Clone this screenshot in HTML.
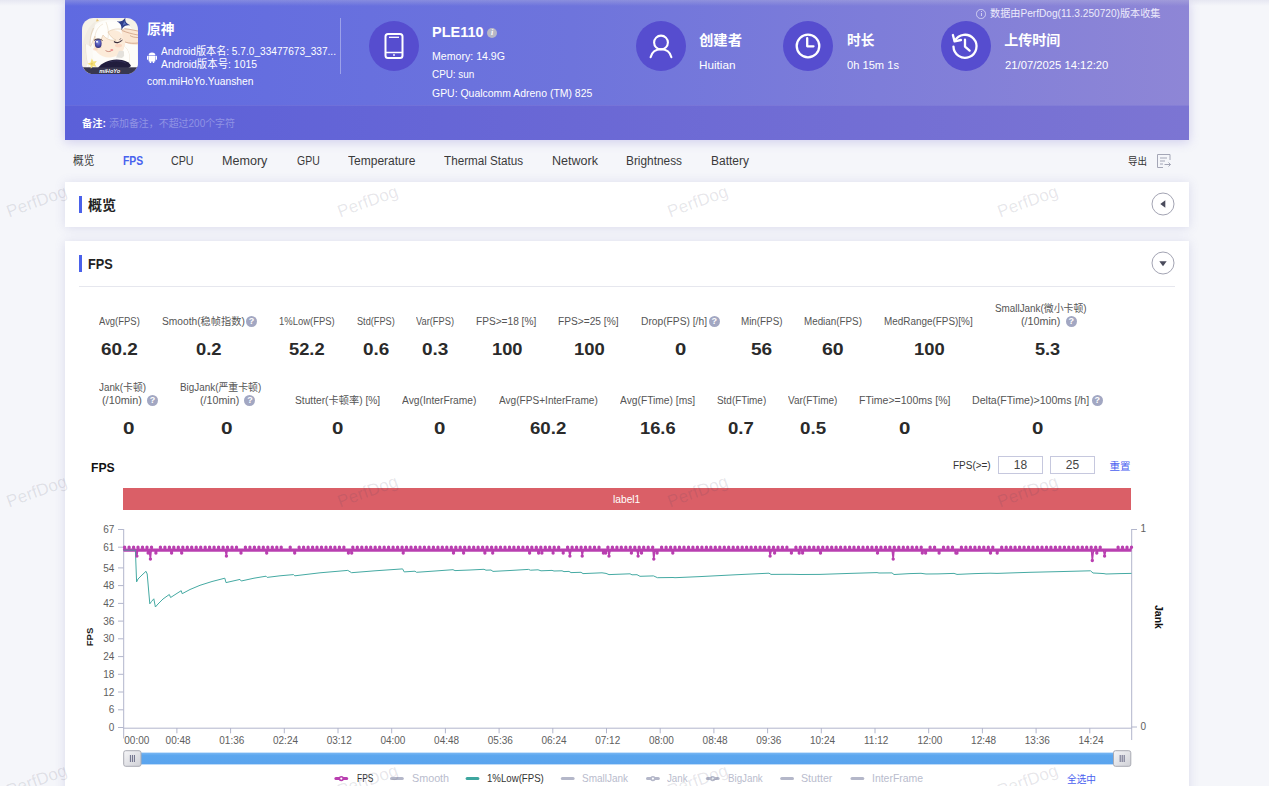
<!DOCTYPE html>
<html lang="zh-CN"><head><meta charset="utf-8"><title>PerfDog</title>
<style>
html,body{margin:0;padding:0}
body{width:1269px;height:786px;overflow:hidden;position:relative;background:#f5f6fa;font-family:"Liberation Sans", "Noto Sans CJK SC", sans-serif;}
.t{position:absolute;white-space:nowrap;}
.abs{position:absolute}
.card{position:absolute;left:65px;width:1124px;background:#fff;box-shadow:0 1px 10px rgba(100,100,180,.18)}
.wm{position:absolute;font-size:17px;letter-spacing:.1px;color:rgba(70,70,95,.135);transform:rotate(-20deg);transform-origin:center;white-space:nowrap;width:80px;height:24px;line-height:24px;text-align:center}
.circ{position:absolute;width:50px;height:50px;border-radius:50%;background:#564dcf}
.q{display:inline-block;width:11px;height:11px;border-radius:50%;background:#9a9fb0;color:#fff;font-size:9px;line-height:11px;text-align:center;font-weight:bold;vertical-align:middle;margin-left:3px;position:relative;top:-1px}
</style></head><body>

<div class="abs" style="left:65px;top:0;width:1124px;height:140px;background:linear-gradient(90deg,#5f6ae1 0%,#6e74dc 45%,#8e86d6 100%);box-shadow:0 2px 10px rgba(110,100,210,.28)"></div>
<div class="abs" style="left:65px;top:105px;width:1124px;height:35px;background:linear-gradient(90deg,#5b60d9 0%,#6a68d5 45%,#7c75d3 100%);border-top:1px solid rgba(255,255,255,.08);box-sizing:border-box"></div>
<svg class="abs" style="left:82px;top:17.800px" width="56" height="56" viewBox="0 0 56 56">
<defs><clipPath id="ic"><rect x="0" y="0" width="56" height="56" rx="11.500"/></clipPath>
<radialGradient id="ey" cx=".5" cy=".35" r=".7"><stop offset="0" stop-color="#7f8fe0"/><stop offset=".6" stop-color="#4a4aa8"/><stop offset="1" stop-color="#2c2a66"/></radialGradient></defs>
<g clip-path="url(#ic)">
<rect width="56" height="56" fill="#f6f2e8"/>
<!-- back hair -->
<path d="M3 56C1 40 2 22 8 12 14 3 26 0 36 2 46 4 53 12 55 22L56 50 40 52 10 54Z" fill="#fdfcf9"/>
<path d="M0 30C2 18 6 8 14 3L10 20 6 44 2 56H0Z" fill="#f1ece2"/>
<!-- face -->
<path d="M11 22C12 14 22 10 32 12 40 13 44 20 43 27 42 34 36 39 28 39.500 19 40 10 33 11 22Z" fill="#fcebd9"/>
<path d="M37 33C40 32 43 33 44 36L40 40 34 39.500Z" fill="#e4e1dc"/>
<!-- blush -->
<ellipse cx="36.500" cy="27.500" rx="3.500" ry="1.800" fill="#f9cdb8" opacity=".7"/>
<ellipse cx="13.500" cy="31" rx="2.500" ry="1.500" fill="#f9cdb8" opacity=".6"/>
<!-- hand -->
<path d="M39 11C44 10 50 12 56 13V27C51 27 46 26 43 24 41 21 40 16 39 11Z" fill="#fbe6d2"/>
<path d="M39 11C44 10 50 12 56 13M40 12.500C45 14.500 50 16 56 17M43 24C47 25.500 52 25.500 56 25M48 17.500C50 19 53 19.500 56 19.500" stroke="#c9967a" stroke-width=".7" fill="none"/>
<!-- front hair / bangs -->
<path d="M8 30C7 18 12 7 24 4 33 2 41 6 43 12 36 10 30 11 26 14 28 18 31 21 34 22 29 23 24 21 21 17 19 21 18 26 19 30 15 27 13 22 13 18 11 22 10 26 8 30Z" fill="#fffefb"/>
<path d="M24 4C26 9 27 14 26 20M13 18C14 12 17 8 21 6" stroke="#e9dcc6" stroke-width=".6" fill="none"/>
<path d="M15 0.500l2 2.500-3 .5z" fill="#e9c57a"/><path d="M11.500 10C8.500 16 7.500 24 8.500 32M8 30C10 26 11 22 13 18 13 22 15 27 19 30 18 26 19 21 21 17 24 21 29 23 34 22 31 21 28 18 26 14 30 11 36 10 43 12" stroke="#dcc0a0" stroke-width=".55" fill="none" stroke-linejoin="round"/><path d="M42 28C47 32 49 40 46 46M4 26C4 36 5 46 9 54" stroke="#e3d2bb" stroke-width=".5" fill="none"/>
<!-- left hair fall -->
<path d="M4 26C4 36 5 46 9 54L16 52C12 46 10 38 11 30Z" fill="#fbf9f4"/>
<!-- right hair lock -->
<path d="M42 28C47 32 49 40 46 46 44 50 40 52 36 52 41 48 43 42 42 36Z" fill="#fffefb"/>
<!-- eye -->
<ellipse cx="16.200" cy="25.600" rx="3.400" ry="4.500" fill="url(#ey)"/>
<path d="M12 22.500C14 20.500 18 20.500 20.500 22.500" stroke="#3a2d3a" stroke-width="1" fill="none"/>
<circle cx="15" cy="23.800" r="1" fill="#fff"/>
<!-- wink -->
<path d="M32 23.500C34 25.300 37.500 25 39.500 22.500" stroke="#3a2d3a" stroke-width="1.100" fill="none"/>
<path d="M37.500 22l1.500-1.800M39 23l1.800-1.200" stroke="#3a2d3a" stroke-width=".6"/>
<!-- mouth -->
<path d="M23.500 32.500C25.500 34 28 34 30 32.300" stroke="#b5665a" stroke-width=".7" fill="none"/>
<ellipse cx="29.800" cy="32" rx="1.500" ry="1" fill="#ee8f8f"/>
<!-- star -->
<path d="M41.500 -1C42 3 43.500 4.500 48.500 5 43.500 6.500 42.500 8 41.500 12.500 40.500 8 39 6.500 34.500 5.500 39 4.500 40.500 3 41.500 -1Z" fill="#2f3f8a" transform="rotate(18 41.500 5.500)"/>
<path d="M41.500 2C41.800 4 42.500 4.800 45 5.200 42.500 5.800 42 6.500 41.500 9Z" fill="#5f78c8" transform="rotate(18 41.500 5.500)"/>
<!-- scarf -->
<path d="M16 50C20 44 30 40 40 42 45 43 48 45 49 48L44 52 20 54Z" fill="#211d3d"/>
<path d="M24 46C30 42 38 42 44 45" stroke="#3a3560" stroke-width=".8" fill="none"/>
<!-- bottom band -->
<rect x="0" y="49.300" width="56" height="7" fill="#38374f"/>
<path d="M18 49.300C22 45 30 43 36 44 32 46 30 48 29 49.300Z" fill="#211d3d"/>
<!-- flower -->
<path d="M9.800 40.500l1.600 3 3.400-.4-2 2.800 1.800 3-3.400-.8-2.400 2.600-.2-3.500-3.200-1.500 3.200-1.300z" fill="#f6e27a"/>
<circle cx="9.800" cy="45.800" r="1" fill="#e8c95a"/>
</g>
<text x="27.800" y="54.800" font-size="5.600" font-weight="bold" font-style="italic" fill="#fff" text-anchor="middle" font-family="'Liberation Sans', 'Noto Sans CJK SC', sans-serif">miHoYo</text>
</svg>
<div class="t" style="left:147px;top:18.5px;height:20px;line-height:20px;font-size:14px;color:#fff;font-weight:bold;transform:scaleX(0.9821);transform-origin:0 50%;">原神</div>
<svg class="abs" style="left:147px;top:51.500px" width="10" height="11.500" viewBox="0 0 18 22" preserveAspectRatio="none"><g fill="#fff"><path d="M3 7h12v10a1 1 0 0 1-1 1H4a1 1 0 0 1-1-1z"/><path d="M3 6a6 5 0 0 1 12 0z"/><rect x="0" y="7" width="2.4" height="8" rx="1.2"/><rect x="15.6" y="7" width="2.4" height="8" rx="1.2"/><rect x="5" y="17" width="2.6" height="5" rx="1.3"/><rect x="10.4" y="17" width="2.6" height="5" rx="1.3"/></g></svg>
<div class="t" style="left:160.5px;top:41.0px;height:20px;line-height:20px;font-size:11px;color:#fff;transform:scaleX(0.9201);transform-origin:0 50%;">Android版本名: 5.7.0_33477673_337...</div>
<div class="t" style="left:160.5px;top:53.5px;height:20px;line-height:20px;font-size:11px;color:#fff;transform:scaleX(0.9458);transform-origin:0 50%;">Android版本号: 1015</div>
<div class="t" style="left:147px;top:71.3px;height:20px;line-height:20px;font-size:11px;color:#fff;transform:scaleX(0.9346);transform-origin:0 50%;">com.miHoYo.Yuanshen</div>
<div class="abs" style="left:340px;top:18px;width:1px;height:56px;background:rgba(255,255,255,.35)"></div>
<div class="circ" style="left:369px;top:21px"></div>
<svg class="abs" style="left:382px;top:32px" width="24" height="28" viewBox="0 0 24 28"><rect x="3.5" y="2" width="17" height="24" rx="2.5" fill="none" stroke="#fff" stroke-width="2"/><line x1="4" y1="20.500" x2="20" y2="20.500" stroke="#fff" stroke-width="1.5"/><line x1="7" y1="5.300" x2="17" y2="5.300" stroke="#fff" stroke-width="1.3"/><circle cx="12" cy="23" r="0.9" fill="#fff"/></svg>
<div class="t" style="left:432px;top:21.8px;height:20px;line-height:20px;font-size:14px;color:#fff;font-weight:bold;transform:scaleX(1.0336);transform-origin:0 50%;">PLE110</div>
<div class="abs" style="left:487px;top:28px;width:10px;height:10px;border-radius:50%;background:#b7b7c6;color:#fff;font-size:8px;line-height:10px;text-align:center;font-weight:bold;font-style:italic;font-family:'Liberation Serif',serif">i</div>
<div class="t" style="left:432px;top:45.8px;height:20px;line-height:20px;font-size:11px;color:#fff;transform:scaleX(0.9629);transform-origin:0 50%;">Memory: 14.9G</div>
<div class="t" style="left:432px;top:64.0px;height:20px;line-height:20px;font-size:11px;color:#fff;transform:scaleX(0.8985);transform-origin:0 50%;">CPU: sun</div>
<div class="t" style="left:432px;top:83.0px;height:20px;line-height:20px;font-size:11px;color:#fff;transform:scaleX(0.9500);transform-origin:0 50%;">GPU: Qualcomm Adreno (TM) 825</div>
<div class="circ" style="left:636px;top:21px"></div>
<svg class="abs" style="left:648px;top:33px" width="26" height="26" viewBox="0 0 26 26" fill="none" stroke="#fff" stroke-width="2.100" stroke-linecap="round"><circle cx="13" cy="9.500" r="6.900"/><path d="M2.600 24.300c1.300-5.300 5.400-8 10.400-8s9.100 2.700 10.400 8"/></svg>
<div class="t" style="left:699px;top:30.0px;height:20px;line-height:20px;font-size:14px;color:#fff;font-weight:bold;transform:scaleX(1.0238);transform-origin:0 50%;">创建者</div>
<div class="t" style="left:699.3px;top:55.3px;height:20px;line-height:20px;font-size:11px;color:#fff;transform:scaleX(1.0657);transform-origin:0 50%;">Huitian</div>
<div class="circ" style="left:783px;top:21px"></div>
<svg class="abs" style="left:794px;top:31.700px" width="28" height="28" viewBox="0 0 28 28" fill="none" stroke="#fff" stroke-width="2.300" stroke-linecap="round" stroke-linejoin="round"><circle cx="14" cy="14" r="11.300"/><path d="M13.200 6.200v8.100h6.300"/></svg>
<div class="t" style="left:847px;top:30.0px;height:20px;line-height:20px;font-size:14px;color:#fff;font-weight:bold;transform:scaleX(0.9821);transform-origin:0 50%;">时长</div>
<div class="t" style="left:847px;top:55.3px;height:20px;line-height:20px;font-size:11px;color:#fff;transform:scaleX(1.0122);transform-origin:0 50%;">0h 15m 1s</div>
<div class="circ" style="left:941px;top:21px"></div>
<svg class="abs" style="left:950.300px;top:30.500px" width="30" height="30" viewBox="0 0 26 26" fill="none" stroke="#fff" stroke-width="2" stroke-linecap="round" stroke-linejoin="round"><path d="M4.200 8.500a10 10 0 1 1-1.200 5"/><path d="M2.500 3.500l1.500 5.500 5.500-1.200"/><path d="M13 7.500v6l4 3.500"/></svg>
<div class="t" style="left:1004.3px;top:30.0px;height:20px;line-height:20px;font-size:14px;color:#fff;font-weight:bold;transform:scaleX(1.0000);transform-origin:0 50%;">上传时间</div>
<div class="t" style="left:1004.5px;top:55.3px;height:20px;line-height:20px;font-size:11px;color:#fff;transform:scaleX(1.0234);transform-origin:0 50%;">21/07/2025 14:12:20</div>
<div class="abs" style="left:976.300px;top:9px;width:9.500px;height:9.500px;border:1px solid #cfcef0;border-radius:50%;box-sizing:border-box"></div><div class="abs" style="left:980.600px;top:12.800px;width:1px;height:3.500px;background:#cfcef0"></div><div class="abs" style="left:980.600px;top:11px;width:1px;height:1px;background:#cfcef0"></div>
<div class="t" style="left:990.3px;top:4.0px;height:20px;line-height:20px;font-size:10px;color:#eceafb;transform:scaleX(1.0136);transform-origin:0 50%;">数据由PerfDog(11.3.250720)版本收集</div>
<div class="t" style="left:82px;top:113.5px;height:20px;line-height:20px;font-size:10px;color:#fff;font-weight:bold;transform:scaleX(1.0281);transform-origin:0 50%;">备注:</div>
<div class="t" style="left:109px;top:113.5px;height:20px;line-height:20px;font-size:10px;color:#9093e4;transform:scaleX(0.9946);transform-origin:0 50%;">添加备注，不超过200个字符</div>
<div class="t" style="left:73px;top:150.9px;height:20px;line-height:20px;font-size:12px;color:#3a3a3a;transform:scaleX(0.8953);transform-origin:0 50%;">概览</div>
<div class="t" style="left:122.7px;top:150.9px;height:20px;line-height:20px;font-size:12px;color:#4862ee;font-weight:bold;transform:scaleX(0.8653);transform-origin:0 50%;">FPS</div>
<div class="t" style="left:171.4px;top:150.9px;height:20px;line-height:20px;font-size:12px;color:#3a3a3a;transform:scaleX(0.8917);transform-origin:0 50%;">CPU</div>
<div class="t" style="left:222.4px;top:150.9px;height:20px;line-height:20px;font-size:12px;color:#3a3a3a;transform:scaleX(1.0474);transform-origin:0 50%;">Memory</div>
<div class="t" style="left:296.5px;top:150.9px;height:20px;line-height:20px;font-size:12px;color:#3a3a3a;transform:scaleX(0.8726);transform-origin:0 50%;">GPU</div>
<div class="t" style="left:348px;top:150.9px;height:20px;line-height:20px;font-size:12px;color:#3a3a3a;transform:scaleX(1.0019);transform-origin:0 50%;">Temperature</div>
<div class="t" style="left:443.8px;top:150.9px;height:20px;line-height:20px;font-size:12px;color:#3a3a3a;transform:scaleX(0.9733);transform-origin:0 50%;">Thermal Status</div>
<div class="t" style="left:551.7px;top:150.9px;height:20px;line-height:20px;font-size:12px;color:#3a3a3a;transform:scaleX(1.0428);transform-origin:0 50%;">Network</div>
<div class="t" style="left:626px;top:150.9px;height:20px;line-height:20px;font-size:12px;color:#3a3a3a;transform:scaleX(0.9876);transform-origin:0 50%;">Brightness</div>
<div class="t" style="left:710.5px;top:150.9px;height:20px;line-height:20px;font-size:12px;color:#3a3a3a;transform:scaleX(0.9970);transform-origin:0 50%;">Battery</div>
<div class="t" style="left:1128px;top:151.6px;height:20px;line-height:20px;font-size:10px;color:#333;transform:scaleX(0.9500);transform-origin:0 50%;">导出</div>
<svg class="abs" style="left:1156px;top:153px" width="16" height="16" viewBox="0 0 16 16" fill="none" stroke="#a4a6b6" stroke-width="1"><path d="M14 7V1.500H1.500v13H7"/><path d="M4 5h7M4 8h5M4 11h3"/><path d="M8.500 11.500h6M12.500 9.500l2 2-2 2"/></svg>
<div class="card" style="top:182px;height:45px"></div>
<div class="abs" style="left:79px;top:196px;width:3px;height:17px;background:#4a61ea"></div>
<div class="t" style="left:88px;top:195.0px;height:20px;line-height:20px;font-size:14px;color:#222;font-weight:bold;">概览</div>
<svg class="abs" style="left:1151.200px;top:192.200px" width="24" height="24" viewBox="0 0 24 24"><circle cx="12" cy="12" r="11" fill="#fff" stroke="#a3a4b3" stroke-width="1"/><path d="M14.300 8.300v7.400l-5-3.700z" fill="#4a4b5c"/></svg>
<div class="card" style="top:241px;height:560px"></div>
<div class="abs" style="left:79px;top:255px;width:3px;height:17px;background:#4a61ea"></div>
<div class="t" style="left:88px;top:253.8px;height:20px;line-height:20px;font-size:14px;color:#222;font-weight:bold;transform:scaleX(0.9069);transform-origin:0 50%;">FPS</div>
<svg class="abs" style="left:1151.200px;top:251.200px" width="24" height="24" viewBox="0 0 24 24"><circle cx="12" cy="12" r="11" fill="#fff" stroke="#a3a4b3" stroke-width="1"/><path d="M8.300 10.200h7.400l-3.700 5z" fill="#4a4b5c"/></svg>
<div class="abs" style="left:79px;top:286px;width:1096px;height:1px;background:#e6e7ee"></div>
<div class="t" style="left:99.2px;top:311.7px;height:20px;line-height:20px;font-size:10px;color:#555;transform:scaleX(0.9451);transform-origin:0 50%;">Avg(FPS)</div>
<div class="t" style="left:101.3px;top:338.1px;height:24px;line-height:24px;font-size:17px;color:#2a2a2a;font-weight:bold;transform:scaleX(1.1120);transform-origin:0 50%;">60.2</div>
<div class="t" style="left:161.6px;top:311.7px;height:20px;line-height:20px;font-size:10px;color:#555;transform:scaleX(1.0206);transform-origin:0 50%;">Smooth(稳帧指数)</div>
<div class="t" style="left:196.3px;top:338.1px;height:24px;line-height:24px;font-size:17px;color:#2a2a2a;font-weight:bold;transform:scaleX(1.0829);transform-origin:0 50%;">0.2</div>
<div class="t" style="left:279.2px;top:311.7px;height:20px;line-height:20px;font-size:10px;color:#555;transform:scaleX(0.9456);transform-origin:0 50%;">1%Low(FPS)</div>
<div class="t" style="left:288.90000000000003px;top:338.1px;height:24px;line-height:24px;font-size:17px;color:#2a2a2a;font-weight:bold;transform:scaleX(1.0757);transform-origin:0 50%;">52.2</div>
<div class="t" style="left:356.8px;top:311.7px;height:20px;line-height:20px;font-size:10px;color:#555;transform:scaleX(0.9167);transform-origin:0 50%;">Std(FPS)</div>
<div class="t" style="left:362.5px;top:338.1px;height:24px;line-height:24px;font-size:17px;color:#2a2a2a;font-weight:bold;transform:scaleX(1.1125);transform-origin:0 50%;">0.6</div>
<div class="t" style="left:416.1px;top:311.7px;height:20px;line-height:20px;font-size:10px;color:#555;transform:scaleX(0.9282);transform-origin:0 50%;">Var(FPS)</div>
<div class="t" style="left:422.0px;top:338.1px;height:24px;line-height:24px;font-size:17px;color:#2a2a2a;font-weight:bold;transform:scaleX(1.1167);transform-origin:0 50%;">0.3</div>
<div class="t" style="left:475.7px;top:311.7px;height:20px;line-height:20px;font-size:10px;color:#555;transform:scaleX(1.0120);transform-origin:0 50%;">FPS&gt;=18 [%]</div>
<div class="t" style="left:491.6px;top:338.1px;height:24px;line-height:24px;font-size:17px;color:#2a2a2a;font-weight:bold;transform:scaleX(1.0749);transform-origin:0 50%;">100</div>
<div class="t" style="left:558px;top:311.7px;height:20px;line-height:20px;font-size:10px;color:#555;transform:scaleX(1.0171);transform-origin:0 50%;">FPS&gt;=25 [%]</div>
<div class="t" style="left:573.5999999999999px;top:338.1px;height:24px;line-height:24px;font-size:17px;color:#2a2a2a;font-weight:bold;transform:scaleX(1.0855);transform-origin:0 50%;">100</div>
<div class="t" style="left:640.5px;top:311.7px;height:20px;line-height:20px;font-size:10px;color:#555;transform:scaleX(1.0238);transform-origin:0 50%;">Drop(FPS) [/h]</div>
<div class="t" style="left:674.5px;top:338.1px;height:24px;line-height:24px;font-size:17px;color:#2a2a2a;font-weight:bold;transform:scaleX(1.1934);transform-origin:0 50%;">0</div>
<div class="t" style="left:740.7px;top:311.7px;height:20px;line-height:20px;font-size:10px;color:#555;transform:scaleX(0.9826);transform-origin:0 50%;">Min(FPS)</div>
<div class="t" style="left:751.3px;top:338.1px;height:24px;line-height:24px;font-size:17px;color:#2a2a2a;font-weight:bold;transform:scaleX(1.1204);transform-origin:0 50%;">56</div>
<div class="t" style="left:804.2px;top:311.7px;height:20px;line-height:20px;font-size:10px;color:#555;transform:scaleX(0.9829);transform-origin:0 50%;">Median(FPS)</div>
<div class="t" style="left:822.3px;top:338.1px;height:24px;line-height:24px;font-size:17px;color:#2a2a2a;font-weight:bold;transform:scaleX(1.1468);transform-origin:0 50%;">60</div>
<div class="t" style="left:884.3px;top:311.7px;height:20px;line-height:20px;font-size:10px;color:#555;transform:scaleX(0.9912);transform-origin:0 50%;">MedRange(FPS)[%]</div>
<div class="t" style="left:913.8px;top:338.1px;height:24px;line-height:24px;font-size:17px;color:#2a2a2a;font-weight:bold;transform:scaleX(1.0819);transform-origin:0 50%;">100</div>
<div class="abs" style="left:246px;top:316.2px;width:11px;height:11px;border-radius:50%;background:#a2a7c2;color:#fff;font-size:9px;line-height:11px;text-align:center;font-weight:bold">?</div>
<div class="abs" style="left:708.7px;top:316.2px;width:11px;height:11px;border-radius:50%;background:#a2a7c2;color:#fff;font-size:9px;line-height:11px;text-align:center;font-weight:bold">?</div>
<div class="t" style="left:995px;top:298.7px;height:20px;line-height:20px;font-size:10px;color:#555;transform:scaleX(0.9871);transform-origin:0 50%;">SmallJank(微小卡顿)</div>
<div class="t" style="left:1021px;top:311.7px;height:20px;line-height:20px;font-size:10px;color:#555;transform:scaleX(1.0739);transform-origin:0 50%;">(/10min)</div>
<div class="abs" style="left:1065.7px;top:316.2px;width:11px;height:11px;border-radius:50%;background:#a2a7c2;color:#fff;font-size:9px;line-height:11px;text-align:center;font-weight:bold">?</div>
<div class="t" style="left:1034.7px;top:338.1px;height:24px;line-height:24px;font-size:17px;color:#2a2a2a;font-weight:bold;transform:scaleX(1.0660);transform-origin:0 50%;">5.3</div>
<div class="t" style="left:294.8px;top:390.8px;height:20px;line-height:20px;font-size:10px;color:#555;transform:scaleX(1.0221);transform-origin:0 50%;">Stutter(卡顿率) [%]</div>
<div class="t" style="left:331.8px;top:417.1px;height:24px;line-height:24px;font-size:17px;color:#2a2a2a;font-weight:bold;transform:scaleX(1.2040);transform-origin:0 50%;">0</div>
<div class="t" style="left:402px;top:390.8px;height:20px;line-height:20px;font-size:10px;color:#555;transform:scaleX(1.0244);transform-origin:0 50%;">Avg(InterFrame)</div>
<div class="t" style="left:433.8px;top:417.1px;height:24px;line-height:24px;font-size:17px;color:#2a2a2a;font-weight:bold;transform:scaleX(1.2040);transform-origin:0 50%;">0</div>
<div class="t" style="left:498.8px;top:390.8px;height:20px;line-height:20px;font-size:10px;color:#555;transform:scaleX(1.0091);transform-origin:0 50%;">Avg(FPS+InterFrame)</div>
<div class="t" style="left:530.0px;top:417.1px;height:24px;line-height:24px;font-size:17px;color:#2a2a2a;font-weight:bold;transform:scaleX(1.0969);transform-origin:0 50%;">60.2</div>
<div class="t" style="left:619.5px;top:390.8px;height:20px;line-height:20px;font-size:10px;color:#555;transform:scaleX(1.0253);transform-origin:0 50%;">Avg(FTime) [ms]</div>
<div class="t" style="left:639.6999999999999px;top:417.1px;height:24px;line-height:24px;font-size:17px;color:#2a2a2a;font-weight:bold;transform:scaleX(1.0757);transform-origin:0 50%;">16.6</div>
<div class="t" style="left:717px;top:390.8px;height:20px;line-height:20px;font-size:10px;color:#555;transform:scaleX(0.9911);transform-origin:0 50%;">Std(FTime)</div>
<div class="t" style="left:728.4px;top:417.1px;height:24px;line-height:24px;font-size:17px;color:#2a2a2a;font-weight:bold;transform:scaleX(1.0956);transform-origin:0 50%;">0.7</div>
<div class="t" style="left:787.8px;top:390.8px;height:20px;line-height:20px;font-size:10px;color:#555;transform:scaleX(0.9989);transform-origin:0 50%;">Var(FTime)</div>
<div class="t" style="left:799.6999999999999px;top:417.1px;height:24px;line-height:24px;font-size:17px;color:#2a2a2a;font-weight:bold;transform:scaleX(1.1040);transform-origin:0 50%;">0.5</div>
<div class="t" style="left:858.9px;top:390.8px;height:20px;line-height:20px;font-size:10px;color:#555;transform:scaleX(1.0530);transform-origin:0 50%;">FTime&gt;=100ms [%]</div>
<div class="t" style="left:899.0px;top:417.1px;height:24px;line-height:24px;font-size:17px;color:#2a2a2a;font-weight:bold;transform:scaleX(1.2040);transform-origin:0 50%;">0</div>
<div class="t" style="left:972.4px;top:390.8px;height:20px;line-height:20px;font-size:10px;color:#555;transform:scaleX(1.0606);transform-origin:0 50%;">Delta(FTime)&gt;100ms [/h]</div>
<div class="t" style="left:1031.5px;top:417.1px;height:24px;line-height:24px;font-size:17px;color:#2a2a2a;font-weight:bold;transform:scaleX(1.2040);transform-origin:0 50%;">0</div>
<div class="abs" style="left:1091.8px;top:395.3px;width:11px;height:11px;border-radius:50%;background:#a2a7c2;color:#fff;font-size:9px;line-height:11px;text-align:center;font-weight:bold">?</div>
<div class="t" style="left:98.8px;top:377.8px;height:20px;line-height:20px;font-size:10px;color:#555;transform:scaleX(0.9833);transform-origin:0 50%;">Jank(卡顿)</div>
<div class="t" style="left:102px;top:390.8px;height:20px;line-height:20px;font-size:10px;color:#555;transform:scaleX(1.0848);transform-origin:0 50%;">(/10min)</div>
<div class="abs" style="left:146.9px;top:395.3px;width:11px;height:11px;border-radius:50%;background:#a2a7c2;color:#fff;font-size:9px;line-height:11px;text-align:center;font-weight:bold">?</div>
<div class="t" style="left:122.8px;top:417.1px;height:24px;line-height:24px;font-size:17px;color:#2a2a2a;font-weight:bold;transform:scaleX(1.2145);transform-origin:0 50%;">0</div>
<div class="t" style="left:179.7px;top:377.8px;height:20px;line-height:20px;font-size:10px;color:#555;transform:scaleX(0.9884);transform-origin:0 50%;">BigJank(严重卡顿)</div>
<div class="t" style="left:200.3px;top:390.8px;height:20px;line-height:20px;font-size:10px;color:#555;transform:scaleX(1.0685);transform-origin:0 50%;">(/10min)</div>
<div class="abs" style="left:244.4px;top:395.3px;width:11px;height:11px;border-radius:50%;background:#a2a7c2;color:#fff;font-size:9px;line-height:11px;text-align:center;font-weight:bold">?</div>
<div class="t" style="left:220.70000000000002px;top:417.1px;height:24px;line-height:24px;font-size:17px;color:#2a2a2a;font-weight:bold;transform:scaleX(1.2251);transform-origin:0 50%;">0</div>
<div class="t" style="left:90.6px;top:458.0px;height:20px;line-height:20px;font-size:13.5px;color:#111;font-weight:bold;transform:scaleX(0.9023);transform-origin:0 50%;">FPS</div>
<div class="t" style="left:953.3px;top:455.8px;height:20px;line-height:20px;font-size:10px;color:#333;transform:scaleX(0.9974);transform-origin:0 50%;">FPS(&gt;=)</div>
<div class="abs" style="left:998px;top:456px;width:45px;height:18px;border:1px solid #c6c8de;box-sizing:border-box;background:#fff;font-size:12px;line-height:17.500px;text-align:center;color:#444">18</div>
<div class="abs" style="left:1050px;top:456px;width:45px;height:18px;border:1px solid #c6c8de;box-sizing:border-box;background:#fff;font-size:12px;line-height:17.500px;text-align:center;color:#444">25</div>
<div class="t" style="left:1109.6px;top:455.5px;height:20px;line-height:20px;font-size:10.5px;color:#4a5ff0;transform:scaleX(1.0000);transform-origin:0 50%;">重置</div>
<div class="abs" style="left:123px;top:488px;width:1008px;height:22px;background:#da5f67"></div>
<div class="t" style="left:613.2px;top:489.2px;height:20px;line-height:20px;font-size:11px;color:#fff;transform:scaleX(0.9299);transform-origin:0 50%;">label1</div>
<svg class="abs" style="left:0;top:0" width="1269" height="786" viewBox="0 0 1269 786">
<g stroke="#b2b6cc" stroke-width="1" fill="none">
<line x1="123.700" y1="529" x2="123.700" y2="738.500"/>
<line x1="123.200" y1="728.200" x2="1132" y2="728.200"/>
<line x1="1131.700" y1="529" x2="1131.700" y2="740"/>
<line x1="118" y1="529.5" x2="123.500" y2="529.5"/>
<line x1="118" y1="547.2" x2="123.500" y2="547.2"/>
<line x1="118" y1="567.9" x2="123.500" y2="567.9"/>
<line x1="118" y1="585.6" x2="123.500" y2="585.6"/>
<line x1="118" y1="603.4" x2="123.500" y2="603.4"/>
<line x1="118" y1="621.1" x2="123.500" y2="621.1"/>
<line x1="118" y1="638.8" x2="123.500" y2="638.8"/>
<line x1="118" y1="656.6" x2="123.500" y2="656.6"/>
<line x1="118" y1="674.3" x2="123.500" y2="674.3"/>
<line x1="118" y1="692.0" x2="123.500" y2="692.0"/>
<line x1="118" y1="709.8" x2="123.500" y2="709.8"/>
<line x1="118" y1="727.5" x2="123.500" y2="727.5"/>
<line x1="1131.500" y1="529.500" x2="1137" y2="529.500"/><line x1="1131.500" y1="727" x2="1137" y2="727"/>
<line x1="176.9" y1="728" x2="176.9" y2="733.300"/>
<line x1="230.6" y1="728" x2="230.6" y2="733.300"/>
<line x1="284.3" y1="728" x2="284.3" y2="733.300"/>
<line x1="338.0" y1="728" x2="338.0" y2="733.300"/>
<line x1="391.7" y1="728" x2="391.7" y2="733.300"/>
<line x1="445.4" y1="728" x2="445.4" y2="733.300"/>
<line x1="499.1" y1="728" x2="499.1" y2="733.300"/>
<line x1="552.8" y1="728" x2="552.8" y2="733.300"/>
<line x1="606.5" y1="728" x2="606.5" y2="733.300"/>
<line x1="660.2" y1="728" x2="660.2" y2="733.300"/>
<line x1="713.9" y1="728" x2="713.9" y2="733.300"/>
<line x1="767.6" y1="728" x2="767.6" y2="733.300"/>
<line x1="821.3" y1="728" x2="821.3" y2="733.300"/>
<line x1="875.0" y1="728" x2="875.0" y2="733.300"/>
<line x1="928.7" y1="728" x2="928.7" y2="733.300"/>
<line x1="982.4" y1="728" x2="982.4" y2="733.300"/>
<line x1="1036.1" y1="728" x2="1036.1" y2="733.300"/>
<line x1="1089.8" y1="728" x2="1089.8" y2="733.300"/>
</g>
<g font-family="'Liberation Sans', 'Noto Sans CJK SC', sans-serif" font-size="10" fill="#5e5e5e">
<text x="114.300" y="533.1" text-anchor="end">67</text>
<text x="114.300" y="550.8" text-anchor="end">61</text>
<text x="114.300" y="571.5" text-anchor="end">54</text>
<text x="114.300" y="589.2" text-anchor="end">48</text>
<text x="114.300" y="607.0" text-anchor="end">42</text>
<text x="114.300" y="624.7" text-anchor="end">36</text>
<text x="114.300" y="642.4" text-anchor="end">30</text>
<text x="114.300" y="660.2" text-anchor="end">24</text>
<text x="114.300" y="677.9" text-anchor="end">18</text>
<text x="114.300" y="695.6" text-anchor="end">12</text>
<text x="114.300" y="713.4" text-anchor="end">6</text>
<text x="114.300" y="731.1" text-anchor="end">0</text>
<text x="1140.500" y="532.300">1</text><text x="1140.500" y="730.200">0</text>
<text x="124.300" y="744.200">00:00</text>
<text x="178.1" y="744.200" text-anchor="middle">00:48</text>
<text x="231.8" y="744.200" text-anchor="middle">01:36</text>
<text x="285.5" y="744.200" text-anchor="middle">02:24</text>
<text x="339.2" y="744.200" text-anchor="middle">03:12</text>
<text x="392.9" y="744.200" text-anchor="middle">04:00</text>
<text x="446.6" y="744.200" text-anchor="middle">04:48</text>
<text x="500.3" y="744.200" text-anchor="middle">05:36</text>
<text x="554.0" y="744.200" text-anchor="middle">06:24</text>
<text x="607.7" y="744.200" text-anchor="middle">07:12</text>
<text x="661.4" y="744.200" text-anchor="middle">08:00</text>
<text x="715.1" y="744.200" text-anchor="middle">08:48</text>
<text x="768.8" y="744.200" text-anchor="middle">09:36</text>
<text x="822.5" y="744.200" text-anchor="middle">10:24</text>
<text x="876.2" y="744.200" text-anchor="middle">11:12</text>
<text x="929.9" y="744.200" text-anchor="middle">12:00</text>
<text x="983.6" y="744.200" text-anchor="middle">12:48</text>
<text x="1037.3" y="744.200" text-anchor="middle">13:36</text>
<text x="1091.0" y="744.200" text-anchor="middle">14:24</text>
</g>
<text transform="translate(93,637) rotate(-90)" font-family="'Liberation Sans', 'Noto Sans CJK SC', sans-serif" font-size="9.500" font-weight="bold" fill="#1c1c1c" text-anchor="middle">FPS</text>
<text transform="translate(1154.800,617) rotate(90)" font-family="'Liberation Sans', 'Noto Sans CJK SC', sans-serif" font-size="10.500" font-weight="bold" fill="#111" text-anchor="middle">Jank</text>
<polyline fill="none" stroke="#45aaa3" stroke-width="1" stroke-linejoin="round" points="123.5,550.2 135.4,550.2 136.6,581.9 138.0,579.0 142.0,575.0 146.0,571.3 147.2,574.0 149.8,603.8 151.5,601.5 153.8,598.8 155.4,607.0 158.0,604.0 163.0,599.0 169.3,594.5 170.6,597.5 176.0,594.0 181.2,590.7 182.2,593.7 190.0,589.5 200.0,585.3 212.0,581.5 224.8,578.2 226.0,582.6 233.0,581.0 240.0,579.4 241.2,581.0 254.0,578.2 266.0,576.2 267.2,577.4 280.0,575.8 293.5,574.6 294.8,575.8 320.0,572.8 347.8,570.4 351.6,572.7 375.0,570.8 402.6,568.9 404.2,571.9 415.0,571.2 416.5,572.3 435.0,571.0 453.0,569.7 455.0,570.6 470.0,570.0 484.0,569.3 486.0,570.2 491.0,570.0 493.0,571.4 510.0,570.5 528.5,569.4 530.5,570.2 538.0,569.8 541.0,570.8 552.0,570.4 554.0,571.0 562.0,570.8 564.0,571.6 569.0,571.4 571.0,572.6 581.0,572.3 583.0,573.6 602.0,572.8 606.0,573.4 609.0,574.6 630.0,573.8 632.0,574.8 637.0,574.7 640.0,576.3 653.5,575.9 657.5,577.7 673.0,577.5 675.0,577.7 700.0,576.6 735.0,574.8 769.0,573.2 771.0,574.4 790.0,574.3 800.0,574.5 820.0,574.4 850.0,573.4 877.0,572.6 879.0,573.0 892.0,572.9 894.0,574.5 910.0,573.6 921.0,573.3 926.0,574.0 938.0,573.9 954.0,573.4 957.0,574.4 975.0,573.6 990.0,573.2 997.0,573.4 1030.0,572.3 1060.0,571.6 1090.5,570.8 1093.0,573.0 1097.0,573.2 1104.0,573.6 1106.0,574.0 1120.0,573.6 1131.5,573.4"/>
<polyline fill="none" stroke="#b93fb0" stroke-width="1.500" stroke-linejoin="round" points="123.5,550.2 124.6,547.2 125.7,550.2 126.9,550.2 128.0,550.2 129.1,547.2 130.2,550.2 131.3,550.2 132.5,550.2 133.6,547.2 134.7,550.2 135.8,550.2 136.9,556.1 138.0,547.2 139.2,550.2 140.3,550.2 141.4,550.2 142.5,547.2 143.6,550.2 144.8,550.2 145.9,550.2 147.0,547.2 148.1,553.1 149.2,550.2 150.4,559.1 151.5,547.2 152.6,550.2 153.7,550.2 154.8,550.2 155.9,553.1 157.1,550.2 158.2,550.2 159.3,550.2 160.4,547.2 161.5,550.2 162.7,550.2 163.8,550.2 164.9,547.2 166.0,550.2 167.1,550.2 168.3,550.2 169.4,547.2 170.5,550.2 171.6,553.1 172.7,550.2 173.8,547.2 175.0,550.2 176.1,550.2 177.2,550.2 178.3,547.2 179.4,550.2 180.6,550.2 181.7,553.1 182.8,547.2 183.9,550.2 185.0,550.2 186.2,550.2 187.3,547.2 188.4,550.2 189.5,550.2 190.6,550.2 191.7,547.2 192.9,550.2 194.0,550.2 195.1,550.2 196.2,547.2 197.3,550.2 198.5,550.2 199.6,550.2 200.7,547.2 201.8,550.2 202.9,550.2 204.1,550.2 205.2,547.2 206.3,550.2 207.4,550.2 208.5,550.2 209.6,547.2 210.8,550.2 211.9,550.2 213.0,550.2 214.1,547.2 215.2,550.2 216.4,550.2 217.5,550.2 218.6,547.2 219.7,550.2 220.8,550.2 222.0,550.2 223.1,547.2 224.2,550.2 225.3,550.2 226.4,556.1 227.5,547.2 228.7,550.2 229.8,550.2 230.9,550.2 232.0,547.2 233.1,550.2 234.3,550.2 235.4,550.2 236.5,547.2 237.6,550.2 238.7,550.2 239.9,550.2 241.0,553.1 242.1,550.2 243.2,550.2 244.3,550.2 245.4,547.2 246.6,550.2 247.7,550.2 248.8,550.2 249.9,547.2 251.0,550.2 252.2,550.2 253.3,550.2 254.4,547.2 255.5,550.2 256.6,550.2 257.8,550.2 258.9,547.2 260.0,550.2 261.1,550.2 262.2,550.2 263.3,547.2 264.5,550.2 265.6,550.2 266.7,553.1 267.8,547.2 268.9,550.2 270.1,550.2 271.2,550.2 272.3,547.2 273.4,550.2 274.5,550.2 275.7,550.2 276.8,547.2 277.9,550.2 279.0,550.2 280.1,550.2 281.2,547.2 282.4,550.2 283.5,550.2 284.6,550.2 285.7,550.2 286.8,550.2 288.0,550.2 289.1,550.2 290.2,547.2 291.3,550.2 292.4,550.2 293.6,550.2 294.7,553.1 295.8,550.2 296.9,550.2 298.0,550.2 299.1,547.2 300.3,550.2 301.4,550.2 302.5,550.2 303.6,547.2 304.7,550.2 305.9,550.2 307.0,550.2 308.1,547.2 309.2,550.2 310.3,550.2 311.5,550.2 312.6,547.2 313.7,550.2 314.8,550.2 315.9,550.2 317.0,547.2 318.2,550.2 319.3,550.2 320.4,550.2 321.5,547.2 322.6,550.2 323.8,550.2 324.9,550.2 326.0,547.2 327.1,550.2 328.2,550.2 329.4,550.2 330.5,547.2 331.6,550.2 332.7,550.2 333.8,550.2 334.9,547.2 336.1,550.2 337.2,550.2 338.3,550.2 339.4,547.2 340.5,550.2 341.7,550.2 342.8,550.2 343.9,547.2 345.0,550.2 346.1,550.2 347.3,550.2 348.4,553.1 349.5,550.2 350.6,550.2 351.7,553.1 352.8,547.2 354.0,550.2 355.1,550.2 356.2,550.2 357.3,547.2 358.4,550.2 359.6,550.2 360.7,550.2 361.8,547.2 362.9,550.2 364.0,550.2 365.2,550.2 366.3,547.2 367.4,550.2 368.5,550.2 369.6,550.2 370.7,547.2 371.9,550.2 373.0,550.2 374.1,550.2 375.2,547.2 376.3,550.2 377.5,550.2 378.6,550.2 379.7,547.2 380.8,550.2 381.9,550.2 383.1,550.2 384.2,547.2 385.3,550.2 386.4,550.2 387.5,550.2 388.6,547.2 389.8,550.2 390.9,550.2 392.0,550.2 393.1,547.2 394.2,550.2 395.4,550.2 396.5,550.2 397.6,547.2 398.7,550.2 399.8,550.2 401.0,550.2 402.1,547.2 403.2,553.1 404.3,550.2 405.4,550.2 406.5,547.2 407.7,550.2 408.8,550.2 409.9,550.2 411.0,547.2 412.1,550.2 413.3,550.2 414.4,550.2 415.5,547.2 416.6,550.2 417.7,550.2 418.9,550.2 420.0,547.2 421.1,550.2 422.2,550.2 423.3,550.2 424.4,547.2 425.6,550.2 426.7,550.2 427.8,550.2 428.9,547.2 430.0,550.2 431.2,550.2 432.3,550.2 433.4,547.2 434.5,550.2 435.6,550.2 436.8,550.2 437.9,547.2 439.0,550.2 440.1,550.2 441.2,550.2 442.3,547.2 443.5,550.2 444.6,550.2 445.7,550.2 446.8,547.2 447.9,550.2 449.1,550.2 450.2,550.2 451.3,547.2 452.4,550.2 453.5,553.1 454.7,550.2 455.8,547.2 456.9,550.2 458.0,550.2 459.1,550.2 460.2,547.2 461.4,550.2 462.5,550.2 463.6,553.1 464.7,547.2 465.8,550.2 467.0,550.2 468.1,550.2 469.2,547.2 470.3,550.2 471.4,550.2 472.6,550.2 473.7,547.2 474.8,550.2 475.9,550.2 477.0,550.2 478.1,547.2 479.3,550.2 480.4,550.2 481.5,550.2 482.6,547.2 483.7,550.2 484.9,553.1 486.0,550.2 487.1,547.2 488.2,550.2 489.3,550.2 490.5,550.2 491.6,547.2 492.7,553.1 493.8,550.2 494.9,550.2 496.0,547.2 497.2,550.2 498.3,550.2 499.4,550.2 500.5,547.2 501.6,550.2 502.8,550.2 503.9,550.2 505.0,547.2 506.1,550.2 507.2,550.2 508.4,550.2 509.5,547.2 510.6,550.2 511.7,550.2 512.8,550.2 513.9,547.2 515.1,550.2 516.2,550.2 517.3,550.2 518.4,547.2 519.5,550.2 520.7,550.2 521.8,550.2 522.9,547.2 524.0,550.2 525.1,550.2 526.3,550.2 527.4,547.2 528.5,550.2 529.6,553.1 530.7,550.2 531.8,547.2 533.0,550.2 534.1,550.2 535.2,550.2 536.3,547.2 537.4,550.2 538.6,553.1 539.7,550.2 540.8,547.2 541.9,553.1 543.0,550.2 544.2,550.2 545.3,547.2 546.4,550.2 547.5,550.2 548.6,550.2 549.7,547.2 550.9,550.2 552.0,550.2 553.1,553.1 554.2,547.2 555.3,550.2 556.5,550.2 557.6,550.2 558.7,547.2 559.8,550.2 560.9,550.2 562.1,550.2 563.2,553.1 564.3,550.2 565.4,550.2 566.5,550.2 567.6,547.2 568.8,550.2 569.9,556.1 571.0,550.2 572.1,547.2 573.2,550.2 574.4,550.2 575.5,550.2 576.6,547.2 577.7,550.2 578.8,550.2 580.0,550.2 581.1,547.2 582.2,556.1 583.3,550.2 584.4,550.2 585.5,547.2 586.7,550.2 587.8,550.2 588.9,550.2 590.0,547.2 591.1,550.2 592.3,550.2 593.4,550.2 594.5,547.2 595.6,550.2 596.7,550.2 597.9,550.2 599.0,547.2 600.1,550.2 601.2,550.2 602.3,550.2 603.4,553.1 604.6,550.2 605.7,553.1 606.8,550.2 607.9,547.2 609.0,556.1 610.2,550.2 611.3,550.2 612.4,547.2 613.5,550.2 614.6,550.2 615.8,550.2 616.9,547.2 618.0,550.2 619.1,550.2 620.2,550.2 621.3,547.2 622.5,550.2 623.6,550.2 624.7,550.2 625.8,547.2 626.9,550.2 628.1,550.2 629.2,550.2 630.3,547.2 631.4,553.1 632.5,550.2 633.7,550.2 634.8,547.2 635.9,550.2 637.0,550.2 638.1,556.1 639.2,547.2 640.4,550.2 641.5,553.1 642.6,550.2 643.7,547.2 644.8,550.2 646.0,550.2 647.1,550.2 648.2,547.2 649.3,550.2 650.4,550.2 651.6,550.2 652.7,547.2 653.8,559.1 654.9,550.2 656.0,550.2 657.1,553.1 658.3,550.2 659.4,550.2 660.5,550.2 661.6,547.2 662.7,550.2 663.9,550.2 665.0,550.2 666.1,547.2 667.2,550.2 668.3,550.2 669.5,550.2 670.6,547.2 671.7,550.2 672.8,553.1 673.9,550.2 675.0,547.2 676.2,550.2 677.3,550.2 678.4,550.2 679.5,547.2 680.6,550.2 681.8,550.2 682.9,550.2 684.0,547.2 685.1,550.2 686.2,550.2 687.4,550.2 688.5,547.2 689.6,550.2 690.7,550.2 691.8,550.2 692.9,547.2 694.1,550.2 695.2,550.2 696.3,550.2 697.4,547.2 698.5,550.2 699.7,550.2 700.8,550.2 701.9,547.2 703.0,550.2 704.1,550.2 705.3,550.2 706.4,547.2 707.5,550.2 708.6,550.2 709.7,550.2 710.8,547.2 712.0,550.2 713.1,550.2 714.2,550.2 715.3,547.2 716.4,550.2 717.6,550.2 718.7,550.2 719.8,547.2 720.9,550.2 722.0,550.2 723.2,550.2 724.3,547.2 725.4,550.2 726.5,550.2 727.6,550.2 728.7,547.2 729.9,550.2 731.0,550.2 732.1,550.2 733.2,547.2 734.3,550.2 735.5,550.2 736.6,550.2 737.7,547.2 738.8,550.2 739.9,550.2 741.1,550.2 742.2,547.2 743.3,550.2 744.4,550.2 745.5,550.2 746.6,547.2 747.8,550.2 748.9,550.2 750.0,550.2 751.1,547.2 752.2,550.2 753.4,550.2 754.5,550.2 755.6,547.2 756.7,550.2 757.8,550.2 759.0,550.2 760.1,547.2 761.2,550.2 762.3,550.2 763.4,550.2 764.5,547.2 765.7,550.2 766.8,550.2 767.9,550.2 769.0,547.2 770.1,556.1 771.3,550.2 772.4,550.2 773.5,547.2 774.6,553.1 775.7,550.2 776.9,550.2 778.0,547.2 779.1,550.2 780.2,550.2 781.3,550.2 782.4,547.2 783.6,550.2 784.7,550.2 785.8,550.2 786.9,547.2 788.0,550.2 789.2,550.2 790.3,550.2 791.4,553.1 792.5,550.2 793.6,550.2 794.8,550.2 795.9,547.2 797.0,550.2 798.1,550.2 799.2,553.1 800.3,547.2 801.5,550.2 802.6,553.1 803.7,550.2 804.8,547.2 805.9,550.2 807.1,550.2 808.2,550.2 809.3,547.2 810.4,550.2 811.5,550.2 812.7,550.2 813.8,547.2 814.9,550.2 816.0,550.2 817.1,550.2 818.2,547.2 819.4,550.2 820.5,553.1 821.6,550.2 822.7,547.2 823.8,550.2 825.0,550.2 826.1,550.2 827.2,547.2 828.3,550.2 829.4,550.2 830.6,550.2 831.7,547.2 832.8,550.2 833.9,550.2 835.0,550.2 836.1,547.2 837.3,550.2 838.4,550.2 839.5,550.2 840.6,547.2 841.7,550.2 842.9,550.2 844.0,550.2 845.1,547.2 846.2,550.2 847.3,550.2 848.5,550.2 849.6,547.2 850.7,550.2 851.8,550.2 852.9,550.2 854.0,547.2 855.2,550.2 856.3,550.2 857.4,550.2 858.5,547.2 859.6,550.2 860.8,550.2 861.9,550.2 863.0,547.2 864.1,550.2 865.2,550.2 866.4,550.2 867.5,547.2 868.6,550.2 869.7,550.2 870.8,550.2 871.9,547.2 873.1,550.2 874.2,550.2 875.3,550.2 876.4,547.2 877.5,553.1 878.7,550.2 879.8,550.2 880.9,547.2 882.0,550.2 883.1,550.2 884.3,550.2 885.4,547.2 886.5,550.2 887.6,550.2 888.7,550.2 889.8,547.2 891.0,550.2 892.1,550.2 893.2,559.1 894.3,547.2 895.4,550.2 896.6,550.2 897.7,550.2 898.8,547.2 899.9,550.2 901.0,550.2 902.2,550.2 903.3,547.2 904.4,550.2 905.5,550.2 906.6,550.2 907.7,547.2 908.9,550.2 910.0,550.2 911.1,550.2 912.2,547.2 913.3,550.2 914.5,550.2 915.6,550.2 916.7,547.2 917.8,550.2 918.9,550.2 920.1,550.2 921.2,547.2 922.3,553.1 923.4,550.2 924.5,550.2 925.6,553.1 926.8,550.2 927.9,550.2 929.0,550.2 930.1,547.2 931.2,550.2 932.4,550.2 933.5,550.2 934.6,547.2 935.7,550.2 936.8,550.2 938.0,550.2 939.1,553.1 940.2,550.2 941.3,550.2 942.4,550.2 943.5,547.2 944.7,550.2 945.8,550.2 946.9,550.2 948.0,547.2 949.1,550.2 950.3,550.2 951.4,550.2 952.5,547.2 953.6,550.2 954.7,550.2 955.9,553.1 957.0,553.1 958.1,550.2 959.2,550.2 960.3,550.2 961.4,547.2 962.6,550.2 963.7,550.2 964.8,550.2 965.9,547.2 967.0,550.2 968.2,550.2 969.3,550.2 970.4,547.2 971.5,550.2 972.6,550.2 973.8,550.2 974.9,547.2 976.0,550.2 977.1,550.2 978.2,550.2 979.3,547.2 980.5,550.2 981.6,550.2 982.7,550.2 983.8,547.2 984.9,550.2 986.1,550.2 987.2,550.2 988.3,547.2 989.4,550.2 990.5,553.1 991.7,550.2 992.8,547.2 993.9,550.2 995.0,550.2 996.1,550.2 997.2,553.1 998.4,550.2 999.5,550.2 1000.6,550.2 1001.7,547.2 1002.8,550.2 1004.0,550.2 1005.1,550.2 1006.2,547.2 1007.3,550.2 1008.4,550.2 1009.6,550.2 1010.7,547.2 1011.8,550.2 1012.9,550.2 1014.0,550.2 1015.1,547.2 1016.3,550.2 1017.4,550.2 1018.5,550.2 1019.6,547.2 1020.7,550.2 1021.9,550.2 1023.0,550.2 1024.1,547.2 1025.2,550.2 1026.3,550.2 1027.5,550.2 1028.6,547.2 1029.7,550.2 1030.8,550.2 1031.9,550.2 1033.0,547.2 1034.2,550.2 1035.3,550.2 1036.4,550.2 1037.5,547.2 1038.6,550.2 1039.8,550.2 1040.9,550.2 1042.0,547.2 1043.1,550.2 1044.2,550.2 1045.4,550.2 1046.5,547.2 1047.6,550.2 1048.7,550.2 1049.8,550.2 1050.9,547.2 1052.1,550.2 1053.2,550.2 1054.3,550.2 1055.4,547.2 1056.5,550.2 1057.7,550.2 1058.8,550.2 1059.9,547.2 1061.0,550.2 1062.1,550.2 1063.3,550.2 1064.4,547.2 1065.5,550.2 1066.6,550.2 1067.7,550.2 1068.8,547.2 1070.0,550.2 1071.1,550.2 1072.2,550.2 1073.3,547.2 1074.4,550.2 1075.6,550.2 1076.7,550.2 1077.8,547.2 1078.9,550.2 1080.0,550.2 1081.2,550.2 1082.3,547.2 1083.4,550.2 1084.5,550.2 1085.6,550.2 1086.7,547.2 1087.9,550.2 1089.0,550.2 1090.1,550.2 1091.2,547.2 1092.3,560.5 1093.5,550.2 1094.6,550.2 1095.7,547.2 1096.8,553.1 1097.9,550.2 1099.1,550.2 1100.2,547.2 1101.3,550.2 1102.4,550.2 1103.5,550.2 1104.6,556.1 1105.8,550.2 1106.9,550.2 1108.0,550.2 1109.1,550.2 1110.2,550.2 1111.4,550.2 1112.5,550.2 1113.6,550.2 1114.7,550.2 1115.8,550.2 1117.0,550.2 1118.1,547.2 1119.2,550.2 1120.3,550.2 1121.4,550.2 1122.5,547.2 1123.7,550.2 1124.8,550.2 1125.9,550.2 1127.0,547.2 1128.1,550.2 1129.3,550.2 1130.4,550.2 1131.5,547.2"/>
<line x1="123.5" y1="550.2" x2="1131.5" y2="550.2" stroke="#b93fb0" stroke-width="3.200"/>
<path fill="#b93fb0" d="M122.9 547.2a1.700 1.700 0 1 0 3.400 0a1.700 1.700 0 1 0 -3.400 0zM127.4 547.2a1.700 1.700 0 1 0 3.400 0a1.700 1.700 0 1 0 -3.400 0zM131.9 547.2a1.700 1.700 0 1 0 3.400 0a1.700 1.700 0 1 0 -3.400 0zM135.2 556.1a1.700 1.700 0 1 0 3.400 0a1.700 1.700 0 1 0 -3.400 0zM136.3 547.2a1.700 1.700 0 1 0 3.400 0a1.700 1.700 0 1 0 -3.400 0zM140.8 547.2a1.700 1.700 0 1 0 3.400 0a1.700 1.700 0 1 0 -3.400 0zM145.3 547.2a1.700 1.700 0 1 0 3.400 0a1.700 1.700 0 1 0 -3.400 0zM146.4 553.1a1.700 1.700 0 1 0 3.400 0a1.700 1.700 0 1 0 -3.400 0zM148.7 559.1a1.700 1.700 0 1 0 3.400 0a1.700 1.700 0 1 0 -3.400 0zM149.8 547.2a1.700 1.700 0 1 0 3.400 0a1.700 1.700 0 1 0 -3.400 0zM154.2 553.1a1.700 1.700 0 1 0 3.400 0a1.700 1.700 0 1 0 -3.400 0zM158.7 547.2a1.700 1.700 0 1 0 3.400 0a1.700 1.700 0 1 0 -3.400 0zM163.2 547.2a1.700 1.700 0 1 0 3.400 0a1.700 1.700 0 1 0 -3.400 0zM167.7 547.2a1.700 1.700 0 1 0 3.400 0a1.700 1.700 0 1 0 -3.400 0zM169.9 553.1a1.700 1.700 0 1 0 3.400 0a1.700 1.700 0 1 0 -3.400 0zM172.1 547.2a1.700 1.700 0 1 0 3.400 0a1.700 1.700 0 1 0 -3.400 0zM176.6 547.2a1.700 1.700 0 1 0 3.400 0a1.700 1.700 0 1 0 -3.400 0zM180.0 553.1a1.700 1.700 0 1 0 3.400 0a1.700 1.700 0 1 0 -3.400 0zM181.1 547.2a1.700 1.700 0 1 0 3.400 0a1.700 1.700 0 1 0 -3.400 0zM185.6 547.2a1.700 1.700 0 1 0 3.400 0a1.700 1.700 0 1 0 -3.400 0zM190.0 547.2a1.700 1.700 0 1 0 3.400 0a1.700 1.700 0 1 0 -3.400 0zM194.5 547.2a1.700 1.700 0 1 0 3.400 0a1.700 1.700 0 1 0 -3.400 0zM199.0 547.2a1.700 1.700 0 1 0 3.400 0a1.700 1.700 0 1 0 -3.400 0zM203.5 547.2a1.700 1.700 0 1 0 3.400 0a1.700 1.700 0 1 0 -3.400 0zM207.9 547.2a1.700 1.700 0 1 0 3.400 0a1.700 1.700 0 1 0 -3.400 0zM212.4 547.2a1.700 1.700 0 1 0 3.400 0a1.700 1.700 0 1 0 -3.400 0zM216.9 547.2a1.700 1.700 0 1 0 3.400 0a1.700 1.700 0 1 0 -3.400 0zM221.4 547.2a1.700 1.700 0 1 0 3.400 0a1.700 1.700 0 1 0 -3.400 0zM224.7 556.1a1.700 1.700 0 1 0 3.400 0a1.700 1.700 0 1 0 -3.400 0zM225.8 547.2a1.700 1.700 0 1 0 3.400 0a1.700 1.700 0 1 0 -3.400 0zM230.3 547.2a1.700 1.700 0 1 0 3.400 0a1.700 1.700 0 1 0 -3.400 0zM234.8 547.2a1.700 1.700 0 1 0 3.400 0a1.700 1.700 0 1 0 -3.400 0zM239.3 553.1a1.700 1.700 0 1 0 3.400 0a1.700 1.700 0 1 0 -3.400 0zM243.7 547.2a1.700 1.700 0 1 0 3.400 0a1.700 1.700 0 1 0 -3.400 0zM248.2 547.2a1.700 1.700 0 1 0 3.400 0a1.700 1.700 0 1 0 -3.400 0zM252.7 547.2a1.700 1.700 0 1 0 3.400 0a1.700 1.700 0 1 0 -3.400 0zM257.2 547.2a1.700 1.700 0 1 0 3.400 0a1.700 1.700 0 1 0 -3.400 0zM261.6 547.2a1.700 1.700 0 1 0 3.400 0a1.700 1.700 0 1 0 -3.400 0zM265.0 553.1a1.700 1.700 0 1 0 3.400 0a1.700 1.700 0 1 0 -3.400 0zM266.1 547.2a1.700 1.700 0 1 0 3.400 0a1.700 1.700 0 1 0 -3.400 0zM270.6 547.2a1.700 1.700 0 1 0 3.400 0a1.700 1.700 0 1 0 -3.400 0zM275.1 547.2a1.700 1.700 0 1 0 3.400 0a1.700 1.700 0 1 0 -3.400 0zM279.5 547.2a1.700 1.700 0 1 0 3.400 0a1.700 1.700 0 1 0 -3.400 0zM288.5 547.2a1.700 1.700 0 1 0 3.400 0a1.700 1.700 0 1 0 -3.400 0zM293.0 553.1a1.700 1.700 0 1 0 3.400 0a1.700 1.700 0 1 0 -3.400 0zM297.4 547.2a1.700 1.700 0 1 0 3.400 0a1.700 1.700 0 1 0 -3.400 0zM301.9 547.2a1.700 1.700 0 1 0 3.400 0a1.700 1.700 0 1 0 -3.400 0zM306.4 547.2a1.700 1.700 0 1 0 3.400 0a1.700 1.700 0 1 0 -3.400 0zM310.9 547.2a1.700 1.700 0 1 0 3.400 0a1.700 1.700 0 1 0 -3.400 0zM315.3 547.2a1.700 1.700 0 1 0 3.400 0a1.700 1.700 0 1 0 -3.400 0zM319.8 547.2a1.700 1.700 0 1 0 3.400 0a1.700 1.700 0 1 0 -3.400 0zM324.3 547.2a1.700 1.700 0 1 0 3.400 0a1.700 1.700 0 1 0 -3.400 0zM328.8 547.2a1.700 1.700 0 1 0 3.400 0a1.700 1.700 0 1 0 -3.400 0zM333.2 547.2a1.700 1.700 0 1 0 3.400 0a1.700 1.700 0 1 0 -3.400 0zM337.7 547.2a1.700 1.700 0 1 0 3.400 0a1.700 1.700 0 1 0 -3.400 0zM342.2 547.2a1.700 1.700 0 1 0 3.400 0a1.700 1.700 0 1 0 -3.400 0zM346.7 553.1a1.700 1.700 0 1 0 3.400 0a1.700 1.700 0 1 0 -3.400 0zM350.0 553.1a1.700 1.700 0 1 0 3.400 0a1.700 1.700 0 1 0 -3.400 0zM351.1 547.2a1.700 1.700 0 1 0 3.400 0a1.700 1.700 0 1 0 -3.400 0zM355.6 547.2a1.700 1.700 0 1 0 3.400 0a1.700 1.700 0 1 0 -3.400 0zM360.1 547.2a1.700 1.700 0 1 0 3.400 0a1.700 1.700 0 1 0 -3.400 0zM364.6 547.2a1.700 1.700 0 1 0 3.400 0a1.700 1.700 0 1 0 -3.400 0zM369.0 547.2a1.700 1.700 0 1 0 3.400 0a1.700 1.700 0 1 0 -3.400 0zM373.5 547.2a1.700 1.700 0 1 0 3.400 0a1.700 1.700 0 1 0 -3.400 0zM378.0 547.2a1.700 1.700 0 1 0 3.400 0a1.700 1.700 0 1 0 -3.400 0zM382.5 547.2a1.700 1.700 0 1 0 3.400 0a1.700 1.700 0 1 0 -3.400 0zM386.9 547.2a1.700 1.700 0 1 0 3.400 0a1.700 1.700 0 1 0 -3.400 0zM391.4 547.2a1.700 1.700 0 1 0 3.400 0a1.700 1.700 0 1 0 -3.400 0zM395.9 547.2a1.700 1.700 0 1 0 3.400 0a1.700 1.700 0 1 0 -3.400 0zM400.4 547.2a1.700 1.700 0 1 0 3.400 0a1.700 1.700 0 1 0 -3.400 0zM401.5 553.1a1.700 1.700 0 1 0 3.400 0a1.700 1.700 0 1 0 -3.400 0zM404.8 547.2a1.700 1.700 0 1 0 3.400 0a1.700 1.700 0 1 0 -3.400 0zM409.3 547.2a1.700 1.700 0 1 0 3.400 0a1.700 1.700 0 1 0 -3.400 0zM413.8 547.2a1.700 1.700 0 1 0 3.400 0a1.700 1.700 0 1 0 -3.400 0zM418.3 547.2a1.700 1.700 0 1 0 3.400 0a1.700 1.700 0 1 0 -3.400 0zM422.7 547.2a1.700 1.700 0 1 0 3.400 0a1.700 1.700 0 1 0 -3.400 0zM427.2 547.2a1.700 1.700 0 1 0 3.400 0a1.700 1.700 0 1 0 -3.400 0zM431.7 547.2a1.700 1.700 0 1 0 3.400 0a1.700 1.700 0 1 0 -3.400 0zM436.2 547.2a1.700 1.700 0 1 0 3.400 0a1.700 1.700 0 1 0 -3.400 0zM440.6 547.2a1.700 1.700 0 1 0 3.400 0a1.700 1.700 0 1 0 -3.400 0zM445.1 547.2a1.700 1.700 0 1 0 3.400 0a1.700 1.700 0 1 0 -3.400 0zM449.6 547.2a1.700 1.700 0 1 0 3.400 0a1.700 1.700 0 1 0 -3.400 0zM451.8 553.1a1.700 1.700 0 1 0 3.400 0a1.700 1.700 0 1 0 -3.400 0zM454.1 547.2a1.700 1.700 0 1 0 3.400 0a1.700 1.700 0 1 0 -3.400 0zM458.5 547.2a1.700 1.700 0 1 0 3.400 0a1.700 1.700 0 1 0 -3.400 0zM461.9 553.1a1.700 1.700 0 1 0 3.400 0a1.700 1.700 0 1 0 -3.400 0zM463.0 547.2a1.700 1.700 0 1 0 3.400 0a1.700 1.700 0 1 0 -3.400 0zM467.5 547.2a1.700 1.700 0 1 0 3.400 0a1.700 1.700 0 1 0 -3.400 0zM472.0 547.2a1.700 1.700 0 1 0 3.400 0a1.700 1.700 0 1 0 -3.400 0zM476.4 547.2a1.700 1.700 0 1 0 3.400 0a1.700 1.700 0 1 0 -3.400 0zM480.9 547.2a1.700 1.700 0 1 0 3.400 0a1.700 1.700 0 1 0 -3.400 0zM483.2 553.1a1.700 1.700 0 1 0 3.400 0a1.700 1.700 0 1 0 -3.400 0zM485.4 547.2a1.700 1.700 0 1 0 3.400 0a1.700 1.700 0 1 0 -3.400 0zM489.9 547.2a1.700 1.700 0 1 0 3.400 0a1.700 1.700 0 1 0 -3.400 0zM491.0 553.1a1.700 1.700 0 1 0 3.400 0a1.700 1.700 0 1 0 -3.400 0zM494.3 547.2a1.700 1.700 0 1 0 3.400 0a1.700 1.700 0 1 0 -3.400 0zM498.8 547.2a1.700 1.700 0 1 0 3.400 0a1.700 1.700 0 1 0 -3.400 0zM503.3 547.2a1.700 1.700 0 1 0 3.400 0a1.700 1.700 0 1 0 -3.400 0zM507.8 547.2a1.700 1.700 0 1 0 3.400 0a1.700 1.700 0 1 0 -3.400 0zM512.2 547.2a1.700 1.700 0 1 0 3.400 0a1.700 1.700 0 1 0 -3.400 0zM516.7 547.2a1.700 1.700 0 1 0 3.400 0a1.700 1.700 0 1 0 -3.400 0zM521.2 547.2a1.700 1.700 0 1 0 3.400 0a1.700 1.700 0 1 0 -3.400 0zM525.7 547.2a1.700 1.700 0 1 0 3.400 0a1.700 1.700 0 1 0 -3.400 0zM527.9 553.1a1.700 1.700 0 1 0 3.400 0a1.700 1.700 0 1 0 -3.400 0zM530.1 547.2a1.700 1.700 0 1 0 3.400 0a1.700 1.700 0 1 0 -3.400 0zM534.6 547.2a1.700 1.700 0 1 0 3.400 0a1.700 1.700 0 1 0 -3.400 0zM536.9 553.1a1.700 1.700 0 1 0 3.400 0a1.700 1.700 0 1 0 -3.400 0zM539.1 547.2a1.700 1.700 0 1 0 3.400 0a1.700 1.700 0 1 0 -3.400 0zM540.2 553.1a1.700 1.700 0 1 0 3.400 0a1.700 1.700 0 1 0 -3.400 0zM543.6 547.2a1.700 1.700 0 1 0 3.400 0a1.700 1.700 0 1 0 -3.400 0zM548.0 547.2a1.700 1.700 0 1 0 3.400 0a1.700 1.700 0 1 0 -3.400 0zM551.4 553.1a1.700 1.700 0 1 0 3.400 0a1.700 1.700 0 1 0 -3.400 0zM552.5 547.2a1.700 1.700 0 1 0 3.400 0a1.700 1.700 0 1 0 -3.400 0zM557.0 547.2a1.700 1.700 0 1 0 3.400 0a1.700 1.700 0 1 0 -3.400 0zM561.5 553.1a1.700 1.700 0 1 0 3.400 0a1.700 1.700 0 1 0 -3.400 0zM565.9 547.2a1.700 1.700 0 1 0 3.400 0a1.700 1.700 0 1 0 -3.400 0zM568.2 556.1a1.700 1.700 0 1 0 3.400 0a1.700 1.700 0 1 0 -3.400 0zM570.4 547.2a1.700 1.700 0 1 0 3.400 0a1.700 1.700 0 1 0 -3.400 0zM574.9 547.2a1.700 1.700 0 1 0 3.400 0a1.700 1.700 0 1 0 -3.400 0zM579.4 547.2a1.700 1.700 0 1 0 3.400 0a1.700 1.700 0 1 0 -3.400 0zM580.5 556.1a1.700 1.700 0 1 0 3.400 0a1.700 1.700 0 1 0 -3.400 0zM583.8 547.2a1.700 1.700 0 1 0 3.400 0a1.700 1.700 0 1 0 -3.400 0zM588.3 547.2a1.700 1.700 0 1 0 3.400 0a1.700 1.700 0 1 0 -3.400 0zM592.8 547.2a1.700 1.700 0 1 0 3.400 0a1.700 1.700 0 1 0 -3.400 0zM597.3 547.2a1.700 1.700 0 1 0 3.400 0a1.700 1.700 0 1 0 -3.400 0zM601.7 553.1a1.700 1.700 0 1 0 3.400 0a1.700 1.700 0 1 0 -3.400 0zM604.0 553.1a1.700 1.700 0 1 0 3.400 0a1.700 1.700 0 1 0 -3.400 0zM606.2 547.2a1.700 1.700 0 1 0 3.400 0a1.700 1.700 0 1 0 -3.400 0zM607.3 556.1a1.700 1.700 0 1 0 3.400 0a1.700 1.700 0 1 0 -3.400 0zM610.7 547.2a1.700 1.700 0 1 0 3.400 0a1.700 1.700 0 1 0 -3.400 0zM615.2 547.2a1.700 1.700 0 1 0 3.400 0a1.700 1.700 0 1 0 -3.400 0zM619.6 547.2a1.700 1.700 0 1 0 3.400 0a1.700 1.700 0 1 0 -3.400 0zM624.1 547.2a1.700 1.700 0 1 0 3.400 0a1.700 1.700 0 1 0 -3.400 0zM628.6 547.2a1.700 1.700 0 1 0 3.400 0a1.700 1.700 0 1 0 -3.400 0zM629.7 553.1a1.700 1.700 0 1 0 3.400 0a1.700 1.700 0 1 0 -3.400 0zM633.1 547.2a1.700 1.700 0 1 0 3.400 0a1.700 1.700 0 1 0 -3.400 0zM636.4 556.1a1.700 1.700 0 1 0 3.400 0a1.700 1.700 0 1 0 -3.400 0zM637.5 547.2a1.700 1.700 0 1 0 3.400 0a1.700 1.700 0 1 0 -3.400 0zM639.8 553.1a1.700 1.700 0 1 0 3.400 0a1.700 1.700 0 1 0 -3.400 0zM642.0 547.2a1.700 1.700 0 1 0 3.400 0a1.700 1.700 0 1 0 -3.400 0zM646.5 547.2a1.700 1.700 0 1 0 3.400 0a1.700 1.700 0 1 0 -3.400 0zM651.0 547.2a1.700 1.700 0 1 0 3.400 0a1.700 1.700 0 1 0 -3.400 0zM652.1 559.1a1.700 1.700 0 1 0 3.400 0a1.700 1.700 0 1 0 -3.400 0zM655.4 553.1a1.700 1.700 0 1 0 3.400 0a1.700 1.700 0 1 0 -3.400 0zM659.9 547.2a1.700 1.700 0 1 0 3.400 0a1.700 1.700 0 1 0 -3.400 0zM664.4 547.2a1.700 1.700 0 1 0 3.400 0a1.700 1.700 0 1 0 -3.400 0zM668.9 547.2a1.700 1.700 0 1 0 3.400 0a1.700 1.700 0 1 0 -3.400 0zM671.1 553.1a1.700 1.700 0 1 0 3.400 0a1.700 1.700 0 1 0 -3.400 0zM673.3 547.2a1.700 1.700 0 1 0 3.400 0a1.700 1.700 0 1 0 -3.400 0zM677.8 547.2a1.700 1.700 0 1 0 3.400 0a1.700 1.700 0 1 0 -3.400 0zM682.3 547.2a1.700 1.700 0 1 0 3.400 0a1.700 1.700 0 1 0 -3.400 0zM686.8 547.2a1.700 1.700 0 1 0 3.400 0a1.700 1.700 0 1 0 -3.400 0zM691.2 547.2a1.700 1.700 0 1 0 3.400 0a1.700 1.700 0 1 0 -3.400 0zM695.7 547.2a1.700 1.700 0 1 0 3.400 0a1.700 1.700 0 1 0 -3.400 0zM700.2 547.2a1.700 1.700 0 1 0 3.400 0a1.700 1.700 0 1 0 -3.400 0zM704.7 547.2a1.700 1.700 0 1 0 3.400 0a1.700 1.700 0 1 0 -3.400 0zM709.1 547.2a1.700 1.700 0 1 0 3.400 0a1.700 1.700 0 1 0 -3.400 0zM713.6 547.2a1.700 1.700 0 1 0 3.400 0a1.700 1.700 0 1 0 -3.400 0zM718.1 547.2a1.700 1.700 0 1 0 3.400 0a1.700 1.700 0 1 0 -3.400 0zM722.6 547.2a1.700 1.700 0 1 0 3.400 0a1.700 1.700 0 1 0 -3.400 0zM727.0 547.2a1.700 1.700 0 1 0 3.400 0a1.700 1.700 0 1 0 -3.400 0zM731.5 547.2a1.700 1.700 0 1 0 3.400 0a1.700 1.700 0 1 0 -3.400 0zM736.0 547.2a1.700 1.700 0 1 0 3.400 0a1.700 1.700 0 1 0 -3.400 0zM740.5 547.2a1.700 1.700 0 1 0 3.400 0a1.700 1.700 0 1 0 -3.400 0zM744.9 547.2a1.700 1.700 0 1 0 3.400 0a1.700 1.700 0 1 0 -3.400 0zM749.4 547.2a1.700 1.700 0 1 0 3.400 0a1.700 1.700 0 1 0 -3.400 0zM753.9 547.2a1.700 1.700 0 1 0 3.400 0a1.700 1.700 0 1 0 -3.400 0zM758.4 547.2a1.700 1.700 0 1 0 3.400 0a1.700 1.700 0 1 0 -3.400 0zM762.8 547.2a1.700 1.700 0 1 0 3.400 0a1.700 1.700 0 1 0 -3.400 0zM767.3 547.2a1.700 1.700 0 1 0 3.400 0a1.700 1.700 0 1 0 -3.400 0zM768.4 556.1a1.700 1.700 0 1 0 3.400 0a1.700 1.700 0 1 0 -3.400 0zM771.8 547.2a1.700 1.700 0 1 0 3.400 0a1.700 1.700 0 1 0 -3.400 0zM772.9 553.1a1.700 1.700 0 1 0 3.400 0a1.700 1.700 0 1 0 -3.400 0zM776.3 547.2a1.700 1.700 0 1 0 3.400 0a1.700 1.700 0 1 0 -3.400 0zM780.7 547.2a1.700 1.700 0 1 0 3.400 0a1.700 1.700 0 1 0 -3.400 0zM785.2 547.2a1.700 1.700 0 1 0 3.400 0a1.700 1.700 0 1 0 -3.400 0zM789.7 553.1a1.700 1.700 0 1 0 3.400 0a1.700 1.700 0 1 0 -3.400 0zM794.2 547.2a1.700 1.700 0 1 0 3.400 0a1.700 1.700 0 1 0 -3.400 0zM797.5 553.1a1.700 1.700 0 1 0 3.400 0a1.700 1.700 0 1 0 -3.400 0zM798.6 547.2a1.700 1.700 0 1 0 3.400 0a1.700 1.700 0 1 0 -3.400 0zM800.9 553.1a1.700 1.700 0 1 0 3.400 0a1.700 1.700 0 1 0 -3.400 0zM803.1 547.2a1.700 1.700 0 1 0 3.400 0a1.700 1.700 0 1 0 -3.400 0zM807.6 547.2a1.700 1.700 0 1 0 3.400 0a1.700 1.700 0 1 0 -3.400 0zM812.1 547.2a1.700 1.700 0 1 0 3.400 0a1.700 1.700 0 1 0 -3.400 0zM816.5 547.2a1.700 1.700 0 1 0 3.400 0a1.700 1.700 0 1 0 -3.400 0zM818.8 553.1a1.700 1.700 0 1 0 3.400 0a1.700 1.700 0 1 0 -3.400 0zM821.0 547.2a1.700 1.700 0 1 0 3.400 0a1.700 1.700 0 1 0 -3.400 0zM825.5 547.2a1.700 1.700 0 1 0 3.400 0a1.700 1.700 0 1 0 -3.400 0zM830.0 547.2a1.700 1.700 0 1 0 3.400 0a1.700 1.700 0 1 0 -3.400 0zM834.4 547.2a1.700 1.700 0 1 0 3.400 0a1.700 1.700 0 1 0 -3.400 0zM838.9 547.2a1.700 1.700 0 1 0 3.400 0a1.700 1.700 0 1 0 -3.400 0zM843.4 547.2a1.700 1.700 0 1 0 3.400 0a1.700 1.700 0 1 0 -3.400 0zM847.9 547.2a1.700 1.700 0 1 0 3.400 0a1.700 1.700 0 1 0 -3.400 0zM852.3 547.2a1.700 1.700 0 1 0 3.400 0a1.700 1.700 0 1 0 -3.400 0zM856.8 547.2a1.700 1.700 0 1 0 3.400 0a1.700 1.700 0 1 0 -3.400 0zM861.3 547.2a1.700 1.700 0 1 0 3.400 0a1.700 1.700 0 1 0 -3.400 0zM865.8 547.2a1.700 1.700 0 1 0 3.400 0a1.700 1.700 0 1 0 -3.400 0zM870.2 547.2a1.700 1.700 0 1 0 3.400 0a1.700 1.700 0 1 0 -3.400 0zM874.7 547.2a1.700 1.700 0 1 0 3.400 0a1.700 1.700 0 1 0 -3.400 0zM875.8 553.1a1.700 1.700 0 1 0 3.400 0a1.700 1.700 0 1 0 -3.400 0zM879.2 547.2a1.700 1.700 0 1 0 3.400 0a1.700 1.700 0 1 0 -3.400 0zM883.7 547.2a1.700 1.700 0 1 0 3.400 0a1.700 1.700 0 1 0 -3.400 0zM888.1 547.2a1.700 1.700 0 1 0 3.400 0a1.700 1.700 0 1 0 -3.400 0zM891.5 559.1a1.700 1.700 0 1 0 3.400 0a1.700 1.700 0 1 0 -3.400 0zM892.6 547.2a1.700 1.700 0 1 0 3.400 0a1.700 1.700 0 1 0 -3.400 0zM897.1 547.2a1.700 1.700 0 1 0 3.400 0a1.700 1.700 0 1 0 -3.400 0zM901.6 547.2a1.700 1.700 0 1 0 3.400 0a1.700 1.700 0 1 0 -3.400 0zM906.0 547.2a1.700 1.700 0 1 0 3.400 0a1.700 1.700 0 1 0 -3.400 0zM910.5 547.2a1.700 1.700 0 1 0 3.400 0a1.700 1.700 0 1 0 -3.400 0zM915.0 547.2a1.700 1.700 0 1 0 3.400 0a1.700 1.700 0 1 0 -3.400 0zM919.5 547.2a1.700 1.700 0 1 0 3.400 0a1.700 1.700 0 1 0 -3.400 0zM920.6 553.1a1.700 1.700 0 1 0 3.400 0a1.700 1.700 0 1 0 -3.400 0zM923.9 553.1a1.700 1.700 0 1 0 3.400 0a1.700 1.700 0 1 0 -3.400 0zM928.4 547.2a1.700 1.700 0 1 0 3.400 0a1.700 1.700 0 1 0 -3.400 0zM932.9 547.2a1.700 1.700 0 1 0 3.400 0a1.700 1.700 0 1 0 -3.400 0zM937.4 553.1a1.700 1.700 0 1 0 3.400 0a1.700 1.700 0 1 0 -3.400 0zM941.8 547.2a1.700 1.700 0 1 0 3.400 0a1.700 1.700 0 1 0 -3.400 0zM946.3 547.2a1.700 1.700 0 1 0 3.400 0a1.700 1.700 0 1 0 -3.400 0zM950.8 547.2a1.700 1.700 0 1 0 3.400 0a1.700 1.700 0 1 0 -3.400 0zM954.2 553.1a1.700 1.700 0 1 0 3.400 0a1.700 1.700 0 1 0 -3.400 0zM955.3 553.1a1.700 1.700 0 1 0 3.400 0a1.700 1.700 0 1 0 -3.400 0zM959.7 547.2a1.700 1.700 0 1 0 3.400 0a1.700 1.700 0 1 0 -3.400 0zM964.2 547.2a1.700 1.700 0 1 0 3.400 0a1.700 1.700 0 1 0 -3.400 0zM968.7 547.2a1.700 1.700 0 1 0 3.400 0a1.700 1.700 0 1 0 -3.400 0zM973.2 547.2a1.700 1.700 0 1 0 3.400 0a1.700 1.700 0 1 0 -3.400 0zM977.6 547.2a1.700 1.700 0 1 0 3.400 0a1.700 1.700 0 1 0 -3.400 0zM982.1 547.2a1.700 1.700 0 1 0 3.400 0a1.700 1.700 0 1 0 -3.400 0zM986.6 547.2a1.700 1.700 0 1 0 3.400 0a1.700 1.700 0 1 0 -3.400 0zM988.8 553.1a1.700 1.700 0 1 0 3.400 0a1.700 1.700 0 1 0 -3.400 0zM991.1 547.2a1.700 1.700 0 1 0 3.400 0a1.700 1.700 0 1 0 -3.400 0zM995.5 553.1a1.700 1.700 0 1 0 3.400 0a1.700 1.700 0 1 0 -3.400 0zM1000.0 547.2a1.700 1.700 0 1 0 3.400 0a1.700 1.700 0 1 0 -3.400 0zM1004.5 547.2a1.700 1.700 0 1 0 3.400 0a1.700 1.700 0 1 0 -3.400 0zM1009.0 547.2a1.700 1.700 0 1 0 3.400 0a1.700 1.700 0 1 0 -3.400 0zM1013.4 547.2a1.700 1.700 0 1 0 3.400 0a1.700 1.700 0 1 0 -3.400 0zM1017.9 547.2a1.700 1.700 0 1 0 3.400 0a1.700 1.700 0 1 0 -3.400 0zM1022.4 547.2a1.700 1.700 0 1 0 3.400 0a1.700 1.700 0 1 0 -3.400 0zM1026.9 547.2a1.700 1.700 0 1 0 3.400 0a1.700 1.700 0 1 0 -3.400 0zM1031.3 547.2a1.700 1.700 0 1 0 3.400 0a1.700 1.700 0 1 0 -3.400 0zM1035.8 547.2a1.700 1.700 0 1 0 3.400 0a1.700 1.700 0 1 0 -3.400 0zM1040.3 547.2a1.700 1.700 0 1 0 3.400 0a1.700 1.700 0 1 0 -3.400 0zM1044.8 547.2a1.700 1.700 0 1 0 3.400 0a1.700 1.700 0 1 0 -3.400 0zM1049.2 547.2a1.700 1.700 0 1 0 3.400 0a1.700 1.700 0 1 0 -3.400 0zM1053.7 547.2a1.700 1.700 0 1 0 3.400 0a1.700 1.700 0 1 0 -3.400 0zM1058.2 547.2a1.700 1.700 0 1 0 3.400 0a1.700 1.700 0 1 0 -3.400 0zM1062.7 547.2a1.700 1.700 0 1 0 3.400 0a1.700 1.700 0 1 0 -3.400 0zM1067.1 547.2a1.700 1.700 0 1 0 3.400 0a1.700 1.700 0 1 0 -3.400 0zM1071.6 547.2a1.700 1.700 0 1 0 3.400 0a1.700 1.700 0 1 0 -3.400 0zM1076.1 547.2a1.700 1.700 0 1 0 3.400 0a1.700 1.700 0 1 0 -3.400 0zM1080.6 547.2a1.700 1.700 0 1 0 3.400 0a1.700 1.700 0 1 0 -3.400 0zM1085.0 547.2a1.700 1.700 0 1 0 3.400 0a1.700 1.700 0 1 0 -3.400 0zM1089.5 547.2a1.700 1.700 0 1 0 3.400 0a1.700 1.700 0 1 0 -3.400 0zM1090.6 560.5a1.700 1.700 0 1 0 3.400 0a1.700 1.700 0 1 0 -3.400 0zM1094.0 547.2a1.700 1.700 0 1 0 3.400 0a1.700 1.700 0 1 0 -3.400 0zM1095.1 553.1a1.700 1.700 0 1 0 3.400 0a1.700 1.700 0 1 0 -3.400 0zM1098.5 547.2a1.700 1.700 0 1 0 3.400 0a1.700 1.700 0 1 0 -3.400 0zM1102.9 556.1a1.700 1.700 0 1 0 3.400 0a1.700 1.700 0 1 0 -3.400 0zM1116.4 547.2a1.700 1.700 0 1 0 3.400 0a1.700 1.700 0 1 0 -3.400 0zM1120.8 547.2a1.700 1.700 0 1 0 3.400 0a1.700 1.700 0 1 0 -3.400 0zM1125.3 547.2a1.700 1.700 0 1 0 3.400 0a1.700 1.700 0 1 0 -3.400 0zM1129.8 547.2a1.700 1.700 0 1 0 3.400 0a1.700 1.700 0 1 0 -3.400 0z"/>
<polyline fill="none" stroke="#5f8a9f" stroke-width="1" points="123.500,550.200 135.400,550.200 135.900,556"/>
<defs><linearGradient id="sl" x1="0" y1="0" x2="0" y2="1"><stop offset="0" stop-color="#7ab8f4"/><stop offset=".25" stop-color="#5ca7ef"/><stop offset="1" stop-color="#5aa4ee"/></linearGradient><linearGradient id="hd" x1="0" y1="0" x2="1" y2="1"><stop offset="0" stop-color="#f6f6f8"/><stop offset="1" stop-color="#cfd0d6"/></linearGradient></defs>
<rect x="124" y="752.600" width="1006" height="11.800" fill="url(#sl)"/>
<rect x="123.7" y="750.700" width="17.300" height="15.600" rx="2" fill="url(#hd)" stroke="#a9aab3" stroke-width="1"/>
<line x1="130.4" y1="755" x2="130.4" y2="762" stroke="#6a6c88" stroke-width="1"/>
<line x1="132.4" y1="755" x2="132.4" y2="762" stroke="#6a6c88" stroke-width="1"/>
<line x1="134.4" y1="755" x2="134.4" y2="762" stroke="#6a6c88" stroke-width="1"/>
<rect x="1113.5" y="750.700" width="17.300" height="15.600" rx="2" fill="url(#hd)" stroke="#a9aab3" stroke-width="1"/>
<line x1="1120.2" y1="755" x2="1120.2" y2="762" stroke="#6a6c88" stroke-width="1"/>
<line x1="1122.2" y1="755" x2="1122.2" y2="762" stroke="#6a6c88" stroke-width="1"/>
<line x1="1124.2" y1="755" x2="1124.2" y2="762" stroke="#6a6c88" stroke-width="1"/>
<rect x="334.4" y="777.100" width="13.800" height="3" rx="1.500" fill="#b93fb0"/>
<circle cx="341.29999999999995" cy="778.600" r="2.700" fill="#b93fb0"/><circle cx="341.29999999999995" cy="778.600" r="1.100" fill="#fff"/>
<rect x="390" y="777.100" width="13.800" height="3" rx="1.500" fill="#b4b7c9"/>
<rect x="465.6" y="777.100" width="13.800" height="3" rx="1.500" fill="#3ea69f"/>
<rect x="560.8" y="777.100" width="13.800" height="3" rx="1.500" fill="#b4b7c9"/>
<rect x="646" y="777.100" width="13.800" height="3" rx="1.500" fill="#b4b7c9"/>
<circle cx="652.9" cy="778.600" r="2.700" fill="#b4b7c9"/><circle cx="652.9" cy="778.600" r="1.100" fill="#fff"/>
<rect x="705.8" y="777.100" width="13.800" height="3" rx="1.500" fill="#b4b7c9"/>
<circle cx="712.6999999999999" cy="778.600" r="2.700" fill="#b4b7c9"/><circle cx="712.6999999999999" cy="778.600" r="1.100" fill="#fff"/>
<rect x="780.2" y="777.100" width="13.800" height="3" rx="1.500" fill="#b4b7c9"/>
<rect x="850.5" y="777.100" width="13.800" height="3" rx="1.500" fill="#b4b7c9"/>
</svg>
<div class="t" style="left:356.6px;top:768.3px;height:20px;line-height:20px;font-size:11px;color:#333;transform:scaleX(0.7661);transform-origin:0 50%;">FPS</div>
<div class="t" style="left:411.5px;top:768.3px;height:20px;line-height:20px;font-size:11px;color:#b9bccd;transform:scaleX(0.9783);transform-origin:0 50%;">Smooth</div>
<div class="t" style="left:487.2px;top:768.3px;height:20px;line-height:20px;font-size:11px;color:#333;transform:scaleX(0.8766);transform-origin:0 50%;">1%Low(FPS)</div>
<div class="t" style="left:582.2px;top:768.3px;height:20px;line-height:20px;font-size:11px;color:#b9bccd;transform:scaleX(0.9064);transform-origin:0 50%;">SmallJank</div>
<div class="t" style="left:667.4px;top:768.3px;height:20px;line-height:20px;font-size:11px;color:#b9bccd;transform:scaleX(0.8860);transform-origin:0 50%;">Jank</div>
<div class="t" style="left:727.8px;top:768.3px;height:20px;line-height:20px;font-size:11px;color:#b9bccd;transform:scaleX(0.8865);transform-origin:0 50%;">BigJank</div>
<div class="t" style="left:801px;top:768.3px;height:20px;line-height:20px;font-size:11px;color:#b9bccd;transform:scaleX(0.9689);transform-origin:0 50%;">Stutter</div>
<div class="t" style="left:871.5px;top:768.3px;height:20px;line-height:20px;font-size:11px;color:#b9bccd;transform:scaleX(0.9499);transform-origin:0 50%;">InterFrame</div>
<div class="t" style="left:1067.2px;top:769.6px;height:20px;line-height:20px;font-size:10px;color:#4a5ff0;transform:scaleX(0.9667);transform-origin:0 50%;">全选中</div>
<div class="abs" style="left:0;top:0;width:1269px;height:6px;background:linear-gradient(180deg,rgba(200,200,225,.32),rgba(200,200,225,0))"></div>
<div class="wm" style="left:-2.799999999999997px;top:190.2px">PerfDog</div>
<div class="wm" style="left:327.6px;top:190.2px">PerfDog</div>
<div class="wm" style="left:658px;top:190.2px">PerfDog</div>
<div class="wm" style="left:988.4000000000001px;top:190.2px">PerfDog</div>
<div class="wm" style="left:-2.799999999999997px;top:479.6px">PerfDog</div>
<div class="wm" style="left:327.6px;top:479.6px">PerfDog</div>
<div class="wm" style="left:658px;top:479.6px">PerfDog</div>
<div class="wm" style="left:988.4000000000001px;top:479.6px">PerfDog</div>
<div class="wm" style="left:-2.799999999999997px;top:769px">PerfDog</div>
<div class="wm" style="left:327.6px;top:769px">PerfDog</div>
<div class="wm" style="left:658px;top:769px">PerfDog</div>
<div class="wm" style="left:988.4000000000001px;top:769px">PerfDog</div>
</body></html>
